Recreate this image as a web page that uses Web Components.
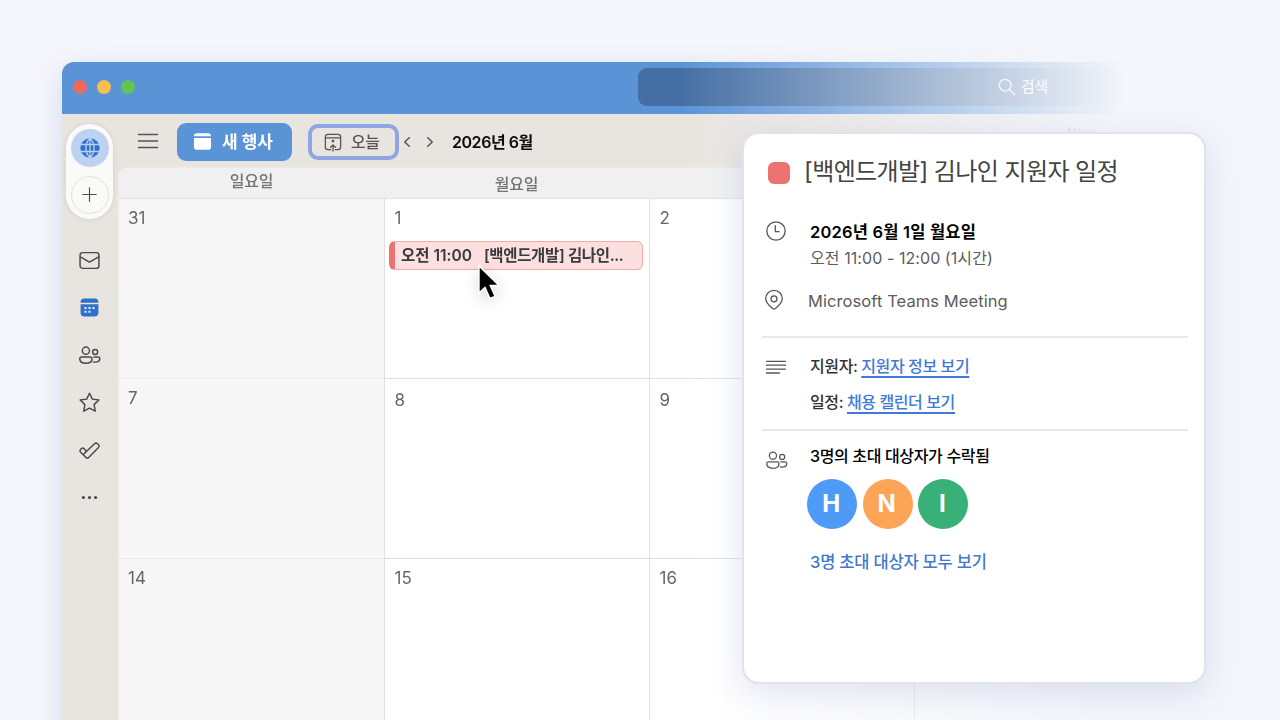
<!DOCTYPE html>
<html lang="ko">
<head>
<meta charset="UTF-8">
<title>캘린더</title>
<style>
    body {
        margin: 0;
        width: 1280px;
        height: 720px;
        overflow: hidden;
        background: #f4f6fb;
        color: #5c5c5c;
        font-family: Inter, "Noto Sans CJK KR", sans-serif;
        font-size: 16px;
        line-height: 24px;
    }
</style>
</head>
<body>
<calendar-window>
    <title-bar slot="title"></title-bar>
    <side-rail slot="rail"></side-rail>
    <tool-bar slot="tools"></tool-bar>
    <month-grid slot="grid"></month-grid>
</calendar-window>
<event-popup></event-popup>
<mouse-pointer></mouse-pointer>

<script>
const ICONS = {
    globe: '<circle cx="10" cy="10" r="9.7" fill="#2d70ce" stroke="none"/><path d="M0 6.500h20M0 13.500h20M10 0v20M10 .3C4.600 5 4.600 15 10 19.700M10 .3c5.400 4.700 5.400 14.700 0 19.400" fill="none" stroke="#bdd2f1" stroke-width="1.300"/>',
    plus: '<path d="M10 3v14M3 10h14"/>',
    mail: '<rect x="1" y="2.500" width="18" height="15" rx="2.600"/><path d="M1.300 6.500 10 11.500l8.700-5"/>',
    people: '<circle cx="6.600" cy="5.400" r="3.400"/><circle cx="15.400" cy="6.600" r="2.400"/><path d="M2.500 11.400h8.200c1 0 1.700.7 1.700 1.700 0 2.700-2.200 4.300-5.800 4.300s-5.900-1.600-5.900-4.300c0-1 .8-1.700 1.800-1.700zM14.200 11.400h4c1 0 1.600.6 1.600 1.500 0 2.100-1.700 3.400-4.400 3.400-.7 0-1.200 0-1.800-.2"/>',
    star: '<path d="m10 1.200 2.700 5.600 6.200.9-4.500 4.300 1.100 6.200L10 15.300l-5.500 2.900L5.600 12 1.100 7.700l6.200-.9z"/>',
    todo: '<path d="m7 11 7.800-7.500c.8-.8 2-.8 2.800 0l1 1c.7.8.7 1.800 0 2.600L9.200 16.600c-.8.800-1.700.8-2.500 0L1.400 11.500c-.7-.8-.7-1.600 0-2.400l1-.9c.8-.7 1.700-.7 2.500 0zM7 11l-3 3"/>',
    more: '<g fill="currentColor" stroke="none"><circle cx="4.200" cy="10" r="1.500"/><circle cx="10" cy="10" r="1.500"/><circle cx="15.800" cy="10" r="1.500"/></g>',
    calendar: '<g stroke="none"><path d="M1.500 5.500V4.700C1.500 2.800 2.800 1.500 4.700 1.500h10.600c1.900 0 3.200 1.300 3.200 3.200v.8zM1.500 7h17v8.300c0 1.900-1.300 3.200-3.200 3.200H4.700c-1.900 0-3.200-1.300-3.200-3.200z" fill="#2f70c9"/><path d="M5.200 9.500h2v2h-2zM9 9.500h2v2H9zM12.800 9.500h2v2h-2zM5.200 13h2v2h-2zM9 13h2v2H9z" fill="#e3edfa"/></g>',
    newEvent: '<path stroke="none" fill="#fff" d="M1 4.500C1 2.500 2.200 1.200 4.200 1.200h11.600c2 0 3.200 1.300 3.200 3.300zM1 6.200h18v9.300c0 2-1.200 3.300-3.200 3.300H4.200c-2 0-3.200-1.300-3.200-3.300z"/>',
    today: '<path d="M7.500 18.500h-3c-2 0-3-1.100-3-3v-11c0-2 1-3 3-3h11c2 0 3 1 3 3v11c0 1.900-1 3-3 3h-3M1.500 5.300h17M10 20v-6.500M7.300 15.800 10 13.200l2.700 2.600"/><circle cx="10" cy="9" r=".8" fill="currentColor"/>',
    menu: '<path d="M.5 3.500h19M.5 10h19M.5 16.500h19"/>',
    prev: '<path d="m12.500 5.300-5 4.700 5 4.700"/>',
    next: '<path d="m7.500 5.300 5 4.700-5 4.700"/>',
    search: '<circle cx="8" cy="8" r="6.500"/><path d="m12.900 12.900 5.600 5.600"/>',
    clock: '<circle cx="10" cy="10" r="9.200"/><path d="M9.300 4.700v6h3.800"/>',
    pin: '<path d="M10 19c-.8 0-1.300-.4-2-1C4.800 15.200 1.700 12.400 1.700 8.700a8.300 8.300 0 0 1 16.600 0c0 3.700-3.100 6.500-6.300 9.300-.7.600-1.200 1-2 1z"/><circle cx="10" cy="8.800" r="3"/>',
    lines: '<path d="M.5 4.300h19M.5 8.200h19M.5 12.100h19M.5 16h13"/>'
};

class UiIcon extends HTMLElement {
    connectedCallback() {
        const size = this.getAttribute('size') || 20;
        const weight = this.getAttribute('weight') || 1.4;
        this.attachShadow({ mode: 'open' });
        this.shadowRoot.innerHTML = `
            <style>
                :host { display: block; flex: none; width: ${size}px; height: ${size}px; }
                svg { display: block; overflow: visible; }
            </style>
            <svg width="${size}" height="${size}" viewBox="0 0 20 20" fill="none" stroke="currentColor"
                stroke-width="${weight}" stroke-linecap="round" stroke-linejoin="round">${ICONS[this.getAttribute('name')]}</svg>
        `;
    }
}

class CalendarWindow extends HTMLElement {
    connectedCallback() {
        this.attachShadow({ mode: 'open' });
        this.shadowRoot.innerHTML = `
            <style>
                /* padding keeps the window shadow inside the masked area */
                :host {
                    display: block;
                    box-sizing: border-box;
                    width: 1280px;
                    height: 720px;
                    padding: 62px 0 0 62px;
                    overflow: hidden;
                    -webkit-mask-image: linear-gradient(to right, #000 680px, transparent 1125px);
                    mask-image: linear-gradient(to right, #000 680px, transparent 1125px);
                }
                .window {
                    display: flex;
                    flex-direction: column;
                    height: 720px;
                    border-radius: 12px 0 0 0;
                    background: #e8e4e0;
                    box-shadow: 0 8px 28px rgba(90, 115, 190, 0.2);
                }
                .body { display: flex; flex: 1; min-height: 0; }
                .main { display: flex; flex-direction: column; flex: 1; }
            </style>
            <div class="window">
                <slot name="title"></slot>
                <div class="body">
                    <slot name="rail"></slot>
                    <div class="main">
                        <slot name="tools"></slot>
                        <slot name="grid"></slot>
                    </div>
                </div>
            </div>
        `;
    }
}

class TitleBar extends HTMLElement {
    connectedCallback() {
        this.attachShadow({ mode: 'open' });
        this.shadowRoot.innerHTML = `
            <style>
                :host {
                    display: flex;
                    align-items: center;
                    height: 52px;
                    border-radius: 12px 0 0 0;
                    background: #5b93d7;
                }
                .lights { display: flex; gap: 10px; width: 565px; padding: 0 0 2px 11px; }
                .lights i { width: 14px; height: 14px; border-radius: 50%; }
                .search {
                    display: flex;
                    align-items: center;
                    gap: 5px;
                    box-sizing: border-box;
                    width: 642px;
                    height: 38px;
                    margin-bottom: 2px;
                    padding-left: 360px;
                    border-radius: 9px;
                    background: #456fa4;
                    color: #fff;
                    font-size: 15px;
                    font-weight: 500;
                    letter-spacing: -0.3px;
                }
            </style>
            <div class="lights">
                <i style="background: #ed6a5f"></i>
                <i style="background: #f5bf4f"></i>
                <i style="background: #61c555"></i>
            </div>
            <div class="search"><ui-icon name="search" size="18" weight="1.5"></ui-icon>검색</div>
        `;
    }
}

class SideRail extends HTMLElement {
    connectedCallback() {
        this.attachShadow({ mode: 'open' });
        this.shadowRoot.innerHTML = `
            <style>
                :host {
                    display: flex;
                    flex-direction: column;
                    align-items: center;
                    box-sizing: border-box;
                    width: 57px;
                    padding: 10px 2px 0 0;
                    color: #4b4848;
                }
                .accounts {
                    display: flex;
                    flex-direction: column;
                    align-items: center;
                    gap: 9px;
                    box-sizing: border-box;
                    width: 47px;
                    height: 95px;
                    padding-top: 5px;
                    border-radius: 24px;
                    background: #fafaf9;
                    box-shadow: 0 0 5px rgba(70, 60, 50, 0.13);
                }
                .accounts div {
                    display: grid;
                    place-items: center;
                    box-sizing: border-box;
                    width: 38px;
                    height: 38px;
                    border-radius: 50%;
                }
                .account { background: #bdd2f1; }
                .add { padding: 0 1px 1px 0; border: 1px solid #e2e1df; }
                nav { display: flex; flex-direction: column; gap: 26.5px; margin-top: 30.5px; }
            </style>
            <div class="accounts">
                <div class="account"><ui-icon name="globe" size="20"></ui-icon></div>
                <div class="add"><ui-icon name="plus" size="19" weight="1.2"></ui-icon></div>
            </div>
            <nav>
                <ui-icon name="mail" size="21"></ui-icon>
                <ui-icon name="calendar" size="21"></ui-icon>
                <ui-icon name="people" size="21"></ui-icon>
                <ui-icon name="star" size="21"></ui-icon>
                <ui-icon name="todo" size="21"></ui-icon>
                <ui-icon name="more" size="21"></ui-icon>
            </nav>
        `;
    }
}

class ToolBar extends HTMLElement {
    connectedCallback() {
        this.attachShadow({ mode: 'open' });
        this.shadowRoot.innerHTML = `
            <style>
                :host {
                    display: flex;
                    align-items: center;
                    height: 54px;
                    padding-left: 19px;
                    background: #e8e4e0;
                    color: #555;
                }
                .new, .today {
                    display: flex;
                    align-items: center;
                    box-sizing: border-box;
                }
                .new {
                    width: 115px;
                    height: 38px;
                    margin: 1px 16px 0 19px;
                    padding-left: 16px;
                    gap: 10px;
                    border-radius: 9px;
                    background: #5b93d7;
                    color: #fff;
                    font-size: 17px;
                    font-weight: 700;
                }
                .today {
                    width: 91px;
                    height: 36px;
                    margin-top: 1px;
                    padding-left: 12px;
                    gap: 9px;
                    border: 4px solid #8fa6e2;
                    border-radius: 10px;
                    font-weight: 500;
                    letter-spacing: -0.4px;
                }
                .arrows { display: flex; gap: 5px; margin: 1px 0 0 -1px; }
                .month {
                    margin: 2px 0 0 13px;
                    color: #0c0c0c;
                    font-weight: 600;
                    letter-spacing: -0.45px;
                }
                .hint { margin: -16px 0 0 534px; color: #76767e; font-size: 13px; font-weight: 600; }
            </style>
            <ui-icon name="menu" size="20" weight="1.4"></ui-icon>
            <div class="new"><ui-icon name="newEvent" size="19"></ui-icon>새 행사</div>
            <div class="today"><ui-icon name="today" size="18"></ui-icon>오늘</div>
            <div class="arrows">
                <ui-icon name="prev" size="18" weight="1.7"></ui-icon>
                <ui-icon name="next" size="18" weight="1.7"></ui-icon>
            </div>
            <div class="month">2026년 6월</div>
            <div class="hint">New</div>
        `;
    }
}

class MonthGrid extends HTMLElement {
    connectedCallback() {
        const rows = [[31, 1, 2, ''], [7, 8, 9, ''], [14, 15, 16, '']];
        const days = ['일요일', '월요일', '', ''];
        const event = '<div class="event"><b>오전 11:00</b><span>[백엔드개발] 김나인...</span></div>';
        this.attachShadow({ mode: 'open' });
        this.shadowRoot.innerHTML = `
            <style>
                :host {
                    display: grid;
                    grid-template-columns: 265px 265px 265px 1fr;
                    grid-template-rows: 31px 180px 180px 180px;
                    border-radius: 8px 0 0 0;
                    overflow: hidden;
                    background: #fff;
                    box-shadow: 0 0 2px rgba(255, 255, 255, 0.8);
                    font-size: 17px;
                }
                .head {
                    background: #f0f0f0;
                    border-bottom: 1px solid #e2e2e3;
                    color: #737373;
                    font-size: 16px;
                    font-weight: 500;
                    line-height: 32px;
                    letter-spacing: -0.2px;
                    text-align: center;
                }
                .head.sunday { line-height: 26px; }
                .cell {
                    box-sizing: border-box;
                    padding: 7px 6px 0 9px;
                    border-left: 1px solid #e0e0e1;
                    border-bottom: 1px solid #e0e0e1;
                    color: #666;
                }
                .week2 { padding-top: 9px; }
                .cell:not(.sunday) { padding-left: 9.5px; }
                .cell.sunday {
                    padding-top: 7px;
                    border-left: 0;
                    border-color: #ececec;
                    background: #f7f7f7;
                }
                .event {
                    display: flex;
                    align-items: center;
                    box-sizing: border-box;
                    width: 254px;
                    height: 29px;
                    margin: 11px 0 0 -5.5px;
                    padding: 1px 0 0 6px;
                    border: 1px solid #f3a9a9;
                    border-left: 6px solid #e97474;
                    border-radius: 6px;
                    background: #fce0e0;
                    color: #3a3a3e;
                    font-size: 15.5px;
                    font-weight: 600;
                    letter-spacing: -0.35px;
                    white-space: nowrap;
                }
                .event b { margin-right: 12px; font-weight: 600; letter-spacing: 0; }
            </style>
            ${days.map((d, i) => `<div class="head ${i ? '' : 'sunday'}">${d}</div>`).join('')}
            ${rows.map((row, w) => row.map((n, i) => `<div class="cell week${w + 1} ${i ? '' : 'sunday'}">${n}${n === 1 ? event : ''}</div>`).join('')).join('')}
        `;
    }
}

class UserAvatar extends HTMLElement {
    connectedCallback() {
        this.attachShadow({ mode: 'open' });
        this.shadowRoot.innerHTML = `
            <style>
                :host {
                    display: grid;
                    place-items: center;
                    width: 50px;
                    height: 50px;
                    border-radius: 50%;
                    background: ${this.getAttribute('color')};
                    color: #fff;
                    font: 700 24px/50px Inter, sans-serif;
                }
                span { margin-left: -1.5px; }
            </style>
            <span><slot></slot></span>
        `;
    }
}

class EventPopup extends HTMLElement {
    connectedCallback() {
        this.attachShadow({ mode: 'open' });
        this.shadowRoot.innerHTML = `
            <style>
                :host {
                    position: absolute;
                    left: 742px;
                    top: 132px;
                    box-sizing: border-box;
                    width: 464px;
                    height: 552px;
                    padding: 19px 16px 0 18px;
                    border: 2px solid #e0e2ed;
                    border-radius: 17px;
                    background: #fff;
                    box-shadow: 0 10px 34px rgba(70, 90, 160, 0.15);
                    white-space: nowrap;
                }
                header { display: flex; align-items: center; height: 38px; gap: 14px; padding-left: 6px; }
                header i { width: 22px; height: 22px; margin-top: 2px; border-radius: 6px; background: #ed7373; }
                h1 { margin: 0; color: #444; font-size: 24px; font-weight: 400; letter-spacing: -0.6px; }
                .row { display: flex; align-items: flex-start; padding-left: 4px; }
                .row ui-icon { color: #555; }
                .row > div { margin-left: 24px; }
                .when { margin-top: 29px; }
                .date { color: #000; font-size: 16.5px; font-weight: 600; letter-spacing: 0.2px; }
                .time { margin-top: 2px; font-size: 16px; letter-spacing: 0.07px; }
                .where { margin-top: 19px; font-size: 16.5px; letter-spacing: 0.08px; }
                hr { height: 2px; margin: 0; border: 0; background: #e6e8eb; }
                .links { margin-top: 16px; color: #333; font-weight: 500; letter-spacing: -0.4px; }
                .links p { margin: 0 0 12px; }
                .links span {
                    color: #4179d8;
                    text-decoration: underline 1.5px;
                    text-decoration-skip-ink: none;
                    text-underline-offset: 3.5px;
                }
                .people { margin-top: 13px; }
                .people > div { margin-left: 23px; }
                .count { color: #000; font-weight: 500; letter-spacing: -0.35px; }
                .avatars { display: flex; gap: 5.5px; margin: 11px 0 21px -3px; }
                .all { color: #4179cc; font-weight: 500; font-size: 16.5px; letter-spacing: -0.2px; }
            </style>
            <header><i></i><h1>[백엔드개발] 김나인 지원자 일정</h1></header>
            <div class="row when">
                <ui-icon name="clock" size="20" weight="1.3" style="margin-top: 1px"></ui-icon>
                <div>
                    <div class="date">2026년 6월 1일 월요일</div>
                    <div class="time">오전 11:00 - 12:00 (1시간)</div>
                </div>
            </div>
            <div class="row where">
                <ui-icon name="pin" size="20" weight="1.3" style="margin: 1px 0 0 -2px"></ui-icon>
                <div>Microsoft Teams Meeting</div>
            </div>
            <hr style="margin-top: 23px">
            <div class="row links">
                <ui-icon name="lines" size="20" weight="1.3" style="margin-top: 3px"></ui-icon>
                <div>
                    <p>지원자: <span>지원자 정보 보기</span></p>
                    <p>일정: <span>채용 캘린더 보기</span></p>
                </div>
            </div>
            <hr style="margin-top: 3px">
            <div class="row people">
                <ui-icon name="people" size="21" weight="1.2" style="margin-top: 6px"></ui-icon>
                <div>
                    <div class="count">3명의 초대 대상자가 수락됨</div>
                    <div class="avatars">
                        <user-avatar color="#4e9af7">H</user-avatar>
                        <user-avatar color="#fea457">N</user-avatar>
                        <user-avatar color="#38b077">I</user-avatar>
                    </div>
                    <div class="all">3명 초대 대상자 모두 보기</div>
                </div>
            </div>
        `;
    }
}

class MousePointer extends HTMLElement {
    connectedCallback() {
        this.attachShadow({ mode: 'open' });
        this.shadowRoot.innerHTML = `
            <style>
                :host {
                    position: absolute;
                    left: 477px;
                    top: 263px;
                    filter: drop-shadow(0 4px 7px rgba(0, 0, 0, 0.15));
                }
                svg { display: block; }
            </style>
            <svg width="24" height="38" viewBox="0 0 24 38">
                <path d="M2 3v27l6-5.500 5 11 5-2.200-4.800-10.800H22z" fill="#000" stroke="#fff" stroke-width="1.400"/>
            </svg>
        `;
    }
}

customElements.define('ui-icon', UiIcon);
customElements.define('calendar-window', CalendarWindow);
customElements.define('title-bar', TitleBar);
customElements.define('side-rail', SideRail);
customElements.define('tool-bar', ToolBar);
customElements.define('month-grid', MonthGrid);
customElements.define('user-avatar', UserAvatar);
customElements.define('event-popup', EventPopup);
customElements.define('mouse-pointer', MousePointer);
</script>
</body>
</html>
